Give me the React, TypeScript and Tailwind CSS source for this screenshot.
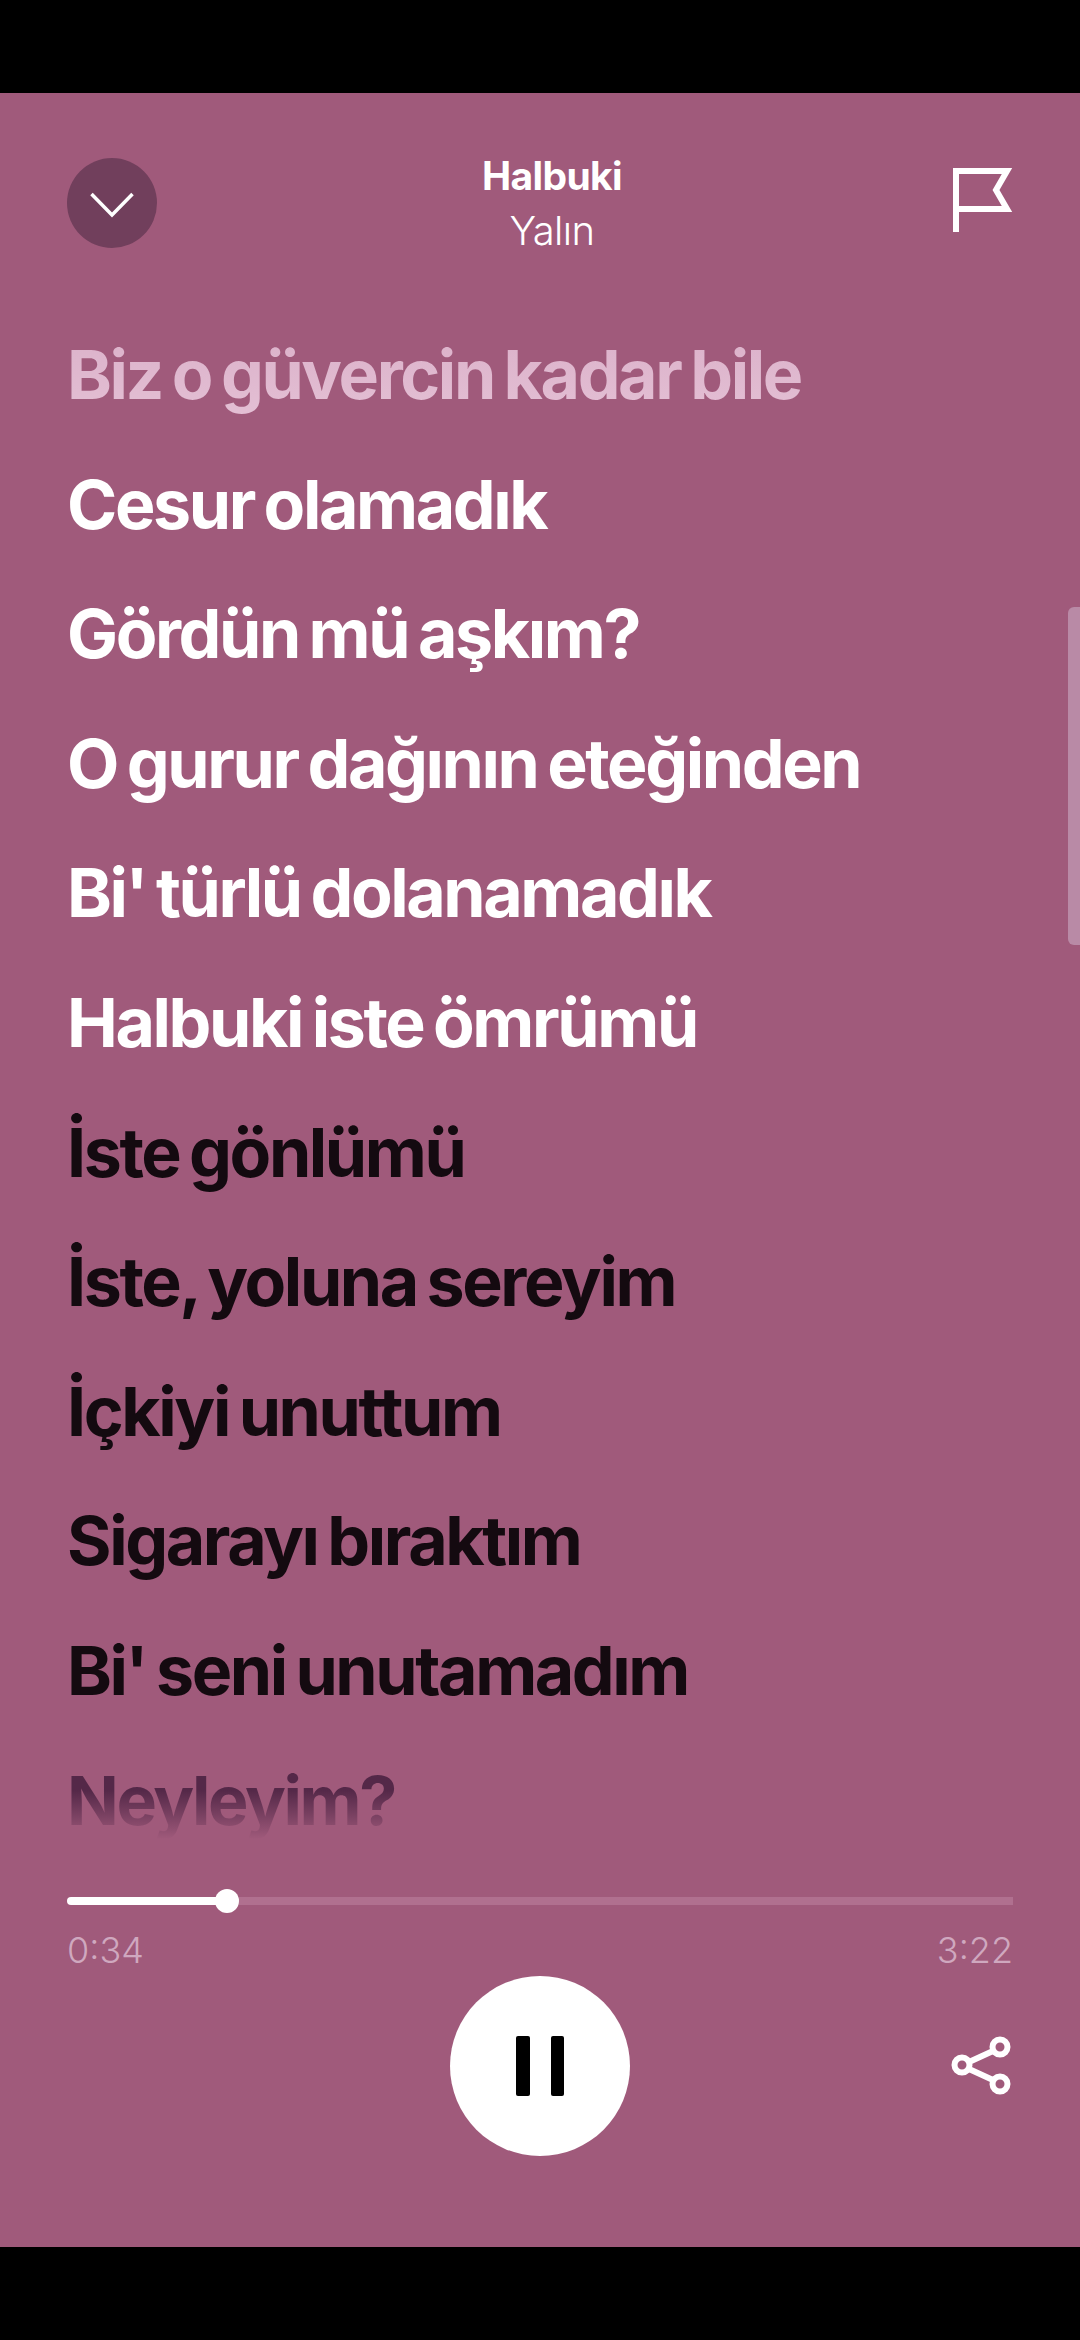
const font = { fontFamily: "Inter, 'Noto Sans', sans-serif" };

const whiteLines = [
  "Cesur olamadık",
  "Gördün mü aşkım?",
  "O gurur dağının eteğinden",
  "Bi' türlü dolanamadık",
  "Halbuki iste ömrümü",
];

const blackLines = [
  "İste gönlümü",
  "İste, yoluna sereyim",
  "İçkiyi unuttum",
  "Sigarayı bıraktım",
  "Bi' seni unutamadım",
];

function Lyric({ text, className }: { text: string; className: string }) {
  return <p className={"h-[129.6px] whitespace-nowrap text-[68px] font-bold leading-[129.6px] tracking-[-2.4px] [word-spacing:-4px] " + className}>{text}</p>;
}

export default function App() {
  return (
    <div className="relative flex h-[2340px] w-[1080px] flex-col overflow-hidden bg-black" style={font}>
      <div className="h-[93px] shrink-0 bg-black" />

      <main className="relative flex flex-1 flex-col bg-[#a05a7b] px-[67px] pt-[65px] text-white">
        <header className="flex items-start justify-between">
          <button className="flex size-[90px] items-center justify-center rounded-full bg-[#713f5c]">
            <svg className="mt-[4px]" width="44" height="26" viewBox="0 0 44 26" fill="none" stroke="white" strokeWidth="3.5">
              <path d="M1.5 2 L22 23 L42.5 2" />
            </svg>
          </button>

          <div className="-mt-[5px] mr-[6px] flex flex-col items-center">
            <span className="text-[39px] font-bold leading-[46px] tracking-[-0.6px]">Halbuki</span>
            <span className="mt-[8px] text-[40px] font-light leading-[48px] tracking-[-0.6px]">Yalın</span>
          </div>

          <svg className="mt-[10px]" width="60" height="64" viewBox="0 0 60 64" fill="none" stroke="white" strokeWidth="6">
            <path d="M3 64 V3 H54 L43 22 L54 41 H3" />
          </svg>
        </header>

        <section className="mt-[55px] flex flex-col">
          <Lyric text="Biz o güvercin kadar bile" className="bg-gradient-to-b from-[#d9aec7] to-[#e6c3d7] bg-clip-text text-transparent" />
          {whiteLines.map((line) => (
            <Lyric key={line} text={line} className="text-white" />
          ))}
          {blackLines.map((line) => (
            <Lyric key={line} text={line} className="text-[#140a10]" />
          ))}
          <Lyric
            text="Neyleyim?"
            className="bg-gradient-to-b from-[#542848] from-[42%] to-[#a05a7b] to-[80%] bg-clip-text text-transparent"
          />
        </section>

        <div className="mt-[24px] flex h-[24px] items-center">
          <div className="relative h-[8px] w-[160px] rounded-l-full bg-white">
            <div className="absolute -right-[12px] -top-[8px] size-[24px] rounded-full bg-white" />
          </div>
          <div className="h-[8px] flex-1 bg-[#b0708f]" />
        </div>

        <div className="mt-[15px] flex justify-between text-[36px] font-light leading-[44px] text-[#cfa8bf]">
          <span>0:34</span>
          <span>3:22</span>
        </div>

        <div className="mt-[4px] grid grid-cols-3 items-center">
          <div />
          <button className="flex size-[180px] items-center justify-center gap-[21px] justify-self-center rounded-full bg-white">
            <span className="h-[60px] w-[14px] rounded-[2px] bg-black" />
            <span className="h-[60px] w-[13px] rounded-[2px] bg-black" />
          </button>
          <svg className="justify-self-end" width="62" height="62" viewBox="0 0 62 62" fill="none" stroke="white" strokeWidth="6">
            <circle cx="49" cy="12" r="7.5" />
            <circle cx="11" cy="30" r="7.5" />
            <circle cx="49" cy="49" r="7.5" />
            <path d="M42 16 L18 27 M18 34 L42 45" />
          </svg>
        </div>

        <div className="absolute right-0 top-[514px] h-[338px] w-[12px] rounded-l-[6px] bg-[#b98aa6]" />
      </main>

      <div className="h-[93px] shrink-0 bg-black" />
    </div>
  );
}
